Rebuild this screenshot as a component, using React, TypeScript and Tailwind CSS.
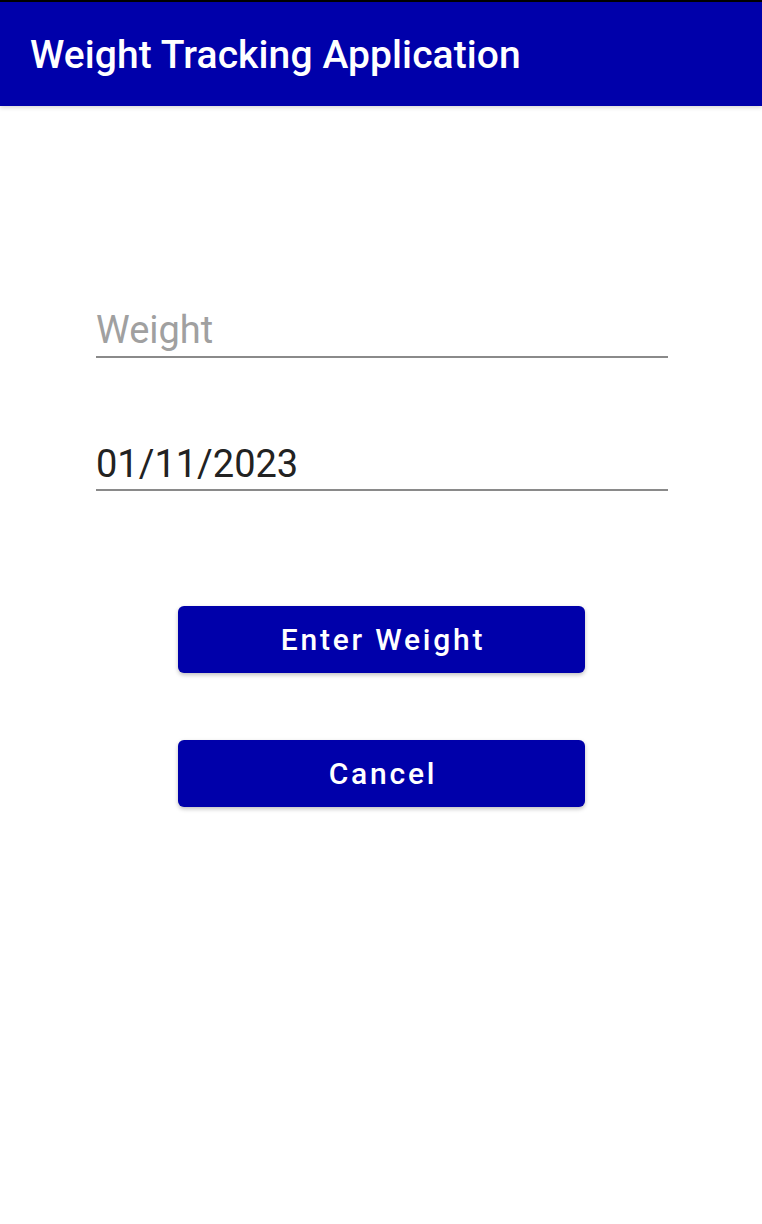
import React from "react";

export default function App() {
  return (
    <div className="w-[762px] h-[1224px] bg-white flex flex-col" style={{ fontFamily: "Roboto, 'Noto Sans', sans-serif" }}>
      <div className="h-[106px] border-t-2 border-black bg-[#0000aa] flex items-center pl-[30px] shadow-[0_2px_4px_rgba(0,0,0,0.15)] relative z-10">
        <span className="text-white text-[39px] font-medium leading-none tracking-[0.1px] mt-[2px]">Weight Tracking Application</span>
      </div>
      <div className="flex flex-col pl-[96px] pr-[94px] pt-[200px]">
        <div className="h-[52px] border-b-2 border-[#8a8a8a] flex items-end pb-[7px]">
          <span className="text-[38px] leading-none text-[#a0a0a0]">Weight</span>
        </div>
        <div className="h-[81px]" />
        <div className="h-[52px] border-b-2 border-[#8a8a8a] flex items-end pb-[6px]">
          <span className="text-[38px] leading-none text-[#222222]">01/11/2023</span>
        </div>
      </div>
      <div className="flex flex-col items-center pt-[115px] gap-[67px]">
        <button className="w-[407px] h-[67px] pl-[4px] rounded-[6px] bg-[#0000aa] text-white text-[30px] font-medium tracking-[2.8px] shadow-[0_2px_4px_rgba(0,0,0,0.25)]">Enter Weight</button>
        <button className="w-[407px] h-[67px] pl-[4px] rounded-[6px] bg-[#0000aa] text-white text-[30px] font-medium tracking-[2.8px] shadow-[0_2px_4px_rgba(0,0,0,0.25)]">Cancel</button>
      </div>
    </div>
  );
}
